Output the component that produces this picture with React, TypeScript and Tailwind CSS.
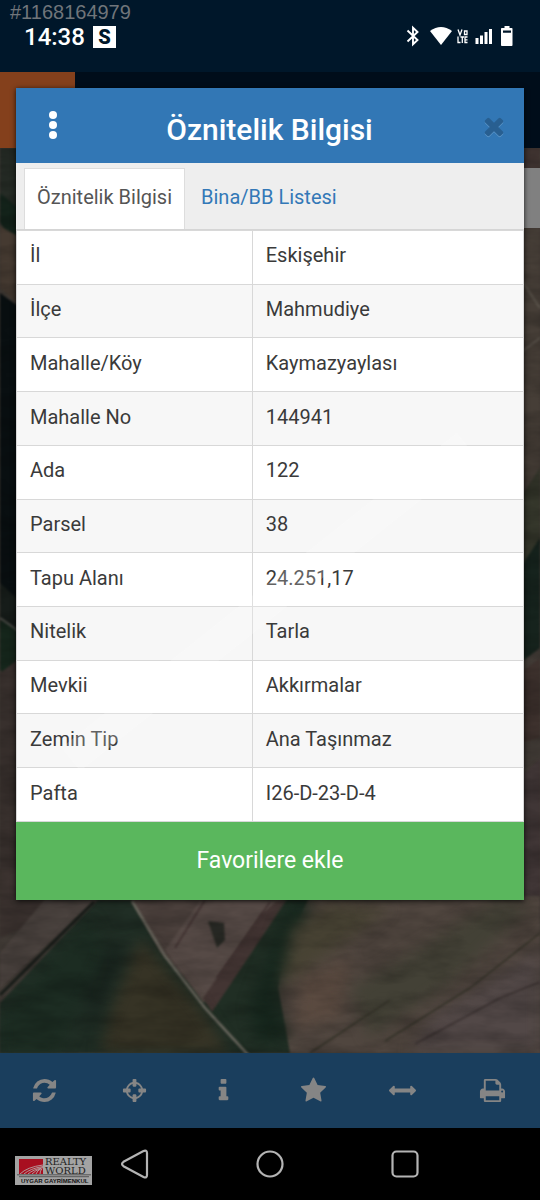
import type { ReactNode } from "react";

const rows: [string, string][] = [
  ["İl", "Eskişehir"],
  ["İlçe", "Mahmudiye"],
  ["Mahalle/Köy", "Kaymazyaylası"],
  ["Mahalle No", "144941"],
  ["Ada", "122"],
  ["Parsel", "38"],
  ["Tapu Alanı", "24.251,17"],
  ["Nitelik", "Tarla"],
  ["Mevkii", "Akkırmalar"],
  ["Zemin Tip", "Ana Taşınmaz"],
  ["Pafta", "I26-D-23-D-4"],
];

const tools: { label: string; path: string }[] = [
  {
    label: "Yenile",
    path: "M1639 1056q0 5-1 7-64 268-268 434.500t-478 166.500q-146 0-282.500-55t-243.500-157l-129 129q-19 19-45 19t-45-19-19-45v-448q0-26 19-45t45-19h448q26 0 45 19t19 45-19 45l-137 137q71 66 161 102t187 36q134 0 250-65t186-179q11-17 53-117 8-23 30-23h192q13 0 22.500 9.500t9.500 22.500zm25-800v448q0 26-19 45t-45 19h-448q-26 0-45-19t-19-45 19-45l138-138q-148-137-349-137-134 0-250 65t-186 179q-11 17-53 117-8 23-30 23h-199q-13 0-22.500-9.500t-9.500-22.500v-7q65-268 270-434.500t480-166.500q146 0 284 55.500t245 156.500l130-129q19-19 45-19t45 19 19 45z",
  },
  {
    label: "Konum",
    path: "M1325 1024h-109q-26 0-45-19t-19-45v-128q0-26 19-45t45-19h109q-32-108-112.500-188.500t-188.500-112.500v109q0 26-19 45t-45 19h-128q-26 0-45-19t-19-45v-109q-108 32-188.500 112.500t-112.500 188.500h109q26 0 45 19t19 45v128q0 26-19 45t-45 19h-109q32 108 112.500 188.500t188.500 112.500v-109q0-26 19-45t45-19h128q26 0 45 19t19 45v109q108-32 188.500-112.500t112.500-188.500zm339-192v128q0 26-19 45t-45 19h-143q-37 161-154.500 278.500t-278.500 154.500v143q0 26-19 45t-45 19h-128q-26 0-45-19t-19-45v-143q-161-37-278.500-154.500t-154.500-278.500h-143q-26 0-45-19t-19-45v-128q0-26 19-45t45-19h143q37-161 154.500-278.500t278.500-154.500v-143q0-26 19-45t45-19h128q26 0 45 19t19 45v143q161 37 278.500 154.500t154.500 278.500h143q26 0 45 19t19 45z",
  },
  {
    label: "Bilgi",
    path: "M1216 1344v128q0 26-19 45t-45 19h-512q-26 0-45-19t-19-45v-128q0-26 19-45t45-19h64v-384h-64q-26 0-45-19t-19-45v-128q0-26 19-45t45-19h384q26 0 45 19t19 45v576h64q26 0 45 19t19 45zm-128-1152v192q0 26-19 45t-45 19h-256q-26 0-45-19t-19-45v-192q0-26 19-45t45-19h256q26 0 45 19t19 45z",
  },
  {
    label: "Favoriler",
    path: "M1728 647q0 22-26 48l-363 354 86 500q1 7 1 20 0 21-10.500 35.500t-30.500 14.500q-19 0-40-12l-449-236-449 236q-22 12-40 12-21 0-31.500-14.500t-10.500-35.500q0-6 2-20l86-500-364-354q-25-27-25-48 0-37 56-46l502-73 225-455q19-41 49-41t49 41l225 455 502 73q56 9 56 46z",
  },
  {
    label: "Ölçüm",
    path: "M1792 896q0 26-19 45l-256 256q-19 19-45 19t-45-19-19-45v-128h-1024v128q0 26-19 45t-45 19-45-19l-256-256q-19-19-19-45t19-45l256-256q19-19 45-19t45 19 19 45v128h1024v-128q0-26 19-45t45-19 45 19l256 256q19 19 19 45z",
  },
  {
    label: "Yazdır",
    path: "M448 1536h896v-256h-896v256zm0-640h896v-384h-160q-40 0-68-28t-28-68v-160h-640v640zm1152 64q0-26-19-45t-45-19-45 19-19 45 19 45 45 19 45-19 19-45zm128 0v416q0 13-9.500 22.500t-22.500 9.500h-224v160q0 40-28 68t-68 28h-960q-40 0-68-28t-28-68v-160h-224q-13 0-22.500-9.500t-9.500-22.500v-416q0-79 56.500-135.500t135.500-56.500h64v-544q0-40 28-68t68-28h672q40 0 88 20t76 48l152 152q28 28 48 76t20 88v256h64q79 0 135.500 56.500t56.500 135.500z",
  },
];

const closePath =
  "M1490 1322q0 40-28 68l-136 136q-28 28-68 28t-68-28l-294-294-294 294q-28 28-68 28t-68-28l-136-136q-28-28-28-68t28-68l294-294-294-294q-28-28-28-68t28-68l136-136q28-28 68-28t68 28l294 294 294-294q28-28 68-28t68 28l136 136q28 28 28 68t-28 68l-294 294 294 294q28 28 28 68z";

function StatusBar() {
  return (
    <header className="flex h-[72px] items-start justify-between bg-[#00172a] pl-6 pr-[26px] pt-6 text-white">
      <div className="flex items-center gap-2">
        <time className="text-[24px] font-medium leading-[26px]">14:38</time>
        <span className="flex h-[22px] w-[23px] items-center justify-center bg-white text-xl font-black leading-none text-[#00172a]">
          S
        </span>
      </div>
      <svg className="h-6 w-[108px]" viewBox="0 0 108 24" fill="#fff" role="img" aria-label="Durum simgeleri">
        <path
          d="M1.5 6.5 11.500 16 7 20.200V3.800L11.500 8 1.500 17.500"
          fill="none"
          stroke="#fff"
          strokeWidth="1.900"
        />
        <path d="M24 7Q35 -1 46 7L35 21Z" />
        <g fill="none" stroke="#fff" strokeWidth="1.300">
          <path d="M52 5.500 54 11 56 5.500M58.500 7h2.500v3.500h-2.500zM52 12.500v6h2.500M54.500 13h3.500M56.300 13v6M61.500 13h-2.500v5.500h2.500M59 15.800h2.500" />
        </g>
        <path d="M69.500 14h3v6h-3zM74 11.500h3V20h-3zM78.500 8h3v12h-3zM83 5h3v15h-3z" />
        <path
          fillRule="evenodd"
          d="M98.500 2h5v2h2.200q.8 0 .8.800V21q0 1-.8 1h-9.900q-.8 0-.8-1V4.800q0-.8.8-.8h2.700zM97 6.500v2.200h8V6.500z"
        />
      </svg>
    </header>
  );
}

function SatelliteMap() {
  return (
    <svg
      className="absolute inset-0 h-full w-full"
      viewBox="0 0 540 905"
      preserveAspectRatio="none"
      aria-hidden="true"
    >
      <defs>
        <filter id="soft" x="-10%" y="-10%" width="120%" height="120%" colorInterpolationFilters="sRGB">
          <feGaussianBlur stdDeviation="7" />
        </filter>
        <filter id="slight" colorInterpolationFilters="sRGB">
          <feGaussianBlur stdDeviation="1" />
        </filter>
        <filter id="grain" x="0" y="0" width="100%" height="100%">
          <feTurbulence type="fractalNoise" baseFrequency="0.02 0.06" numOctaves="4" seed="8" />
          <feColorMatrix values="0 0 0 0 0  0 0 0 0 0  0 0 0 0 0  1.600 0 0 0 -0.550" />
        </filter>
      </defs>
      <rect width="540" height="905" fill="#403a35" />
      <g filter="url(#slight)">
        <path d="M0 0h60v96L0 50z" fill="#252b25" />
        <path d="M0 45 60 95v60L0 75z" fill="#14241b" />
        <path d="M0 78 60 112v80L0 140z" fill="#453a31" />
        <path d="M0 145 60 188v310L0 440z" fill="#090f11" />
        <path d="M0 435 60 490v40L0 480z" fill="#161c19" />
        <path d="M0 472 60 508v70L0 522z" fill="#16271c" />
        <path d="M0 470 60 512" stroke="#555650" strokeWidth="2" />
        <path d="M0 525 60 480v270H0z" fill="#38302d" />
        <path d="M500 0h40v90h-40z" fill="#403431" />
        <path d="M500 80h40v270l-40 60z" fill="#463e37" />
        <path d="M520 130 540 160M520 205 540 190" stroke="#5c554d" strokeWidth="2" />
        <path d="M500 380 540 320v80l-40 60z" fill="#36382c" />
        <path d="M500 450 540 390v110l-40 30z" fill="#16231d" />
        <path d="M500 540 540 510v80l-40 10z" fill="#3d312d" />
        <path d="M500 650 540 610v160h-40z" fill="#403636" />
      </g>
      <g filter="url(#slight)">
        <path d="M0 790 90 750V720H0z" fill="#3c3330" />
        <path d="M0 840 98 750H46L0 805z" fill="#4b433f" />
        <path d="M0 855 98 752H132L250 905H0z" fill="#202e25" />
        <path d="M125 740H290L212 862 160 803z" fill="#4b403c" />
        <path d="M165 802 200 753H275L203 855z" fill="#564a46" />
        <path d="M203 850 262 765 278 753 288 753 212 864z" fill="#433533" />
        <path d="M212 864 288 750H330L280 840 292 905H245z" fill="#202e24" />
        <path d="M310 748H540V905H290L278 840Q282 800 310 748z" fill="#50463f" />
      </g>
      <g filter="url(#soft)">
        <path d="M100 905 112 860 140 790 200 860 230 905z" fill="#363325" />
        <path d="M84 858 110 795 124 800 100 868z" fill="#18231d" />
        <path d="M0 870 90 770 105 800 60 905H0z" fill="#1c2c22" />
        <path d="M258 895 250 860 290 753 312 753 272 850 288 890z" fill="#17281e" />
        <path d="M293 780 330 755 390 760 350 790 280 840z" fill="#484334" />
        <path d="M350 840 420 800 500 750 530 760 450 835 370 890z" fill="#434136" />
        <path d="M300 830 350 810 340 870 295 880z" fill="#5a4a40" />
        <path d="M430 870 540 800v105H410z" fill="#524847" />
      </g>
      <g filter="url(#slight)">
        <path d="M208 773 224 775 225 792 217 800z" fill="#2b2c27" />
      </g>
      <g filter="url(#slight)" fill="none">
        <path d="M132 753 165 808 205 860 250 909" stroke="#6b685f" strokeWidth="2.500" />
        <path d="M0 847 94 754" stroke="#171c18" strokeWidth="3" />
        <path d="M310 905 390 852M385 893 470 840 540 785" stroke="#353329" strokeWidth="1.500" />
        <path d="M415 896 500 850 540 834" stroke="#3e3534" strokeWidth="2" />
        <path d="M217 830 270 754M175 800 205 752" stroke="#3d2f2e" strokeWidth="1.500" />
      </g>
      <rect width="540" height="905" filter="url(#grain)" opacity="0.250" />
    </svg>
  );
}

function InfoDialog() {
  return (
    <section
      role="dialog"
      aria-labelledby="dialog-title"
      className="absolute inset-x-4 top-[88px] flex flex-col shadow-[0_1px_5px_#000c]"
    >
      <div className="flex h-[75px] items-center justify-between bg-[#3277b5] pl-[31px] pr-4 text-white">
        <button type="button" aria-label="Menü" className="pb-px">
          <svg className="h-7 w-3" viewBox="0 0 12 28" fill="#fff">
            <circle cx="6" cy="4" r="4" />
            <circle cx="6" cy="14" r="4" />
            <circle cx="6" cy="24" r="4" />
          </svg>
        </button>
        <h1 id="dialog-title" className="pt-2 text-[30px] font-medium leading-8">
          Öznitelik Bilgisi
        </h1>
        <button type="button" aria-label="Kapat">
          <svg className="h-7 w-7 drop-shadow-[0_1px_0_#5a94c6]" viewBox="0 0 1792 1792" fill="#285f91">
            <path d={closePath} />
          </svg>
        </button>
      </div>
      <div role="tablist" className="flex h-[67px] border-b border-[#d5d5d5] bg-[#eee] pl-2 pt-[5px] text-[20px]">
        <button
          type="button"
          role="tab"
          aria-selected="true"
          className="border border-b-0 border-[#ddd] bg-white px-3 pb-1 text-[#555]"
        >
          Öznitelik Bilgisi
        </button>
        <button type="button" role="tab" aria-selected="false" className="px-4 pb-1 text-[#3378b7]">
          Bina/BB Listesi
        </button>
      </div>
      <div className="relative">
        <table className="h-[592px] w-full table-fixed border-collapse bg-white text-[20px] leading-7 text-[#3a3a3a]">
          <colgroup>
            <col className="w-[46.5%]" />
            <col />
          </colgroup>
          <tbody>
            {rows.map(([name, value]) => (
              <tr key={name} className="even:bg-[#f7f7f7]">
                <th scope="row" className="border border-[#d8d8d8] px-[13px] pb-1 text-left font-normal">
                  {name}
                </th>
                <td className="border border-[#d8d8d8] px-[13px] pb-1">{value}</td>
              </tr>
            ))}
          </tbody>
        </table>
        <svg
          className="pointer-events-none absolute inset-0 h-full w-full"
          viewBox="0 0 508 593"
          preserveAspectRatio="none"
          aria-hidden="true"
        >
          <path d="M55 530 450 215" stroke="#fff" strokeWidth="30" opacity="0.200" />
        </svg>
      </div>
      <button type="button" className="h-[78px] bg-[#5ab75d] text-[23px] text-white">
        Favorilere ekle
      </button>
    </section>
  );
}

function Toolbar() {
  return (
    <div className="flex h-[75px] bg-[#1a3e5d] pr-[3px]">
      {tools.map(({ label, path }) => (
        <button key={label} type="button" aria-label={label} className="flex flex-1 items-center justify-center">
          <svg className="size-[27px]" viewBox="0 0 1792 1792" fill="#858585">
            <path d={path} />
          </svg>
        </button>
      ))}
    </div>
  );
}

function NavButton({ label, children }: { label: string; children: ReactNode }) {
  return (
    <button type="button" aria-label={label} className="flex w-1/4 items-center justify-center">
      <svg className="size-8" viewBox="0 0 32 32" fill="none" stroke="#b4b4b4" strokeWidth="2.200">
        {children}
      </svg>
    </button>
  );
}

function AgencyLogo() {
  return (
    <svg className="absolute left-[15px] top-7 h-[29px] w-[77px]" viewBox="0 0 77 29" role="img" aria-label="Realty World">
      <rect width="77" height="29" fill="#a3a3a3" />
      <rect x="4" y="3" width="24" height="15" fill="#a80f20" />
      <g fill="none" stroke="#b5a5a5" strokeWidth="0.900">
        <path d="M5 18Q12 11 28 9M9 18Q15 12.500 28 10.500M13 18Q18 13.500 28 11.500M17 18Q20 14.500 26 12.500M21 18Q22 15 26 12.500M25 18Q25 15 27 12.500" />
      </g>
      <path d="M2 18.800H76M4 20.700H74" stroke="#333" strokeWidth="0.700" />
      <text x="30" y="9" fontSize="10" fill="#222" className="font-['DejaVu_Serif',serif]">
        REALTY
      </text>
      <text x="30" y="18" fontSize="10" fill="#222" className="font-['DejaVu_Serif',serif]">
        WORLD
      </text>
      <text x="6" y="27" fontSize="6" fontWeight="700" fill="#111" className="font-['Liberation_Sans',sans-serif]">
        UYGAR GAYRİMENKUL
      </text>
    </svg>
  );
}

export default function App() {
  return (
    <div className="relative flex min-h-screen flex-col bg-black font-[Roboto,sans-serif]">
      <StatusBar />
      <div className="flex h-[76px] bg-[#000d1a]">
        <div className="w-[75px] bg-[#84401c]" />
      </div>
      <main className="relative flex-1 overflow-hidden pt-5">
        <SatelliteMap />
        <div className="relative ml-auto h-[60px] w-1/2 bg-[#808080]" />
      </main>
      <Toolbar />
      <nav className="relative flex h-[72px] justify-center bg-black">
        <AgencyLogo />
        <NavButton label="Geri">
          <path d="M4.500 13.800 24 3.200Q28 1.500 28 5V27Q28 30.500 24.500 29L4.500 18.200Q1.500 16 4.500 13.800z" />
        </NavButton>
        <NavButton label="Ana ekran">
          <circle cx="16" cy="16" r="12.500" />
        </NavButton>
        <NavButton label="Son uygulamalar">
          <rect x="3.500" y="3.500" width="25" height="25" rx="4" />
        </NavButton>
      </nav>
      <InfoDialog />
      <span className="absolute left-[10px] top-0 font-['Liberation_Sans',sans-serif] text-[20px] leading-6 text-[#70757a]">
        #1168164979
      </span>
    </div>
  );
}
